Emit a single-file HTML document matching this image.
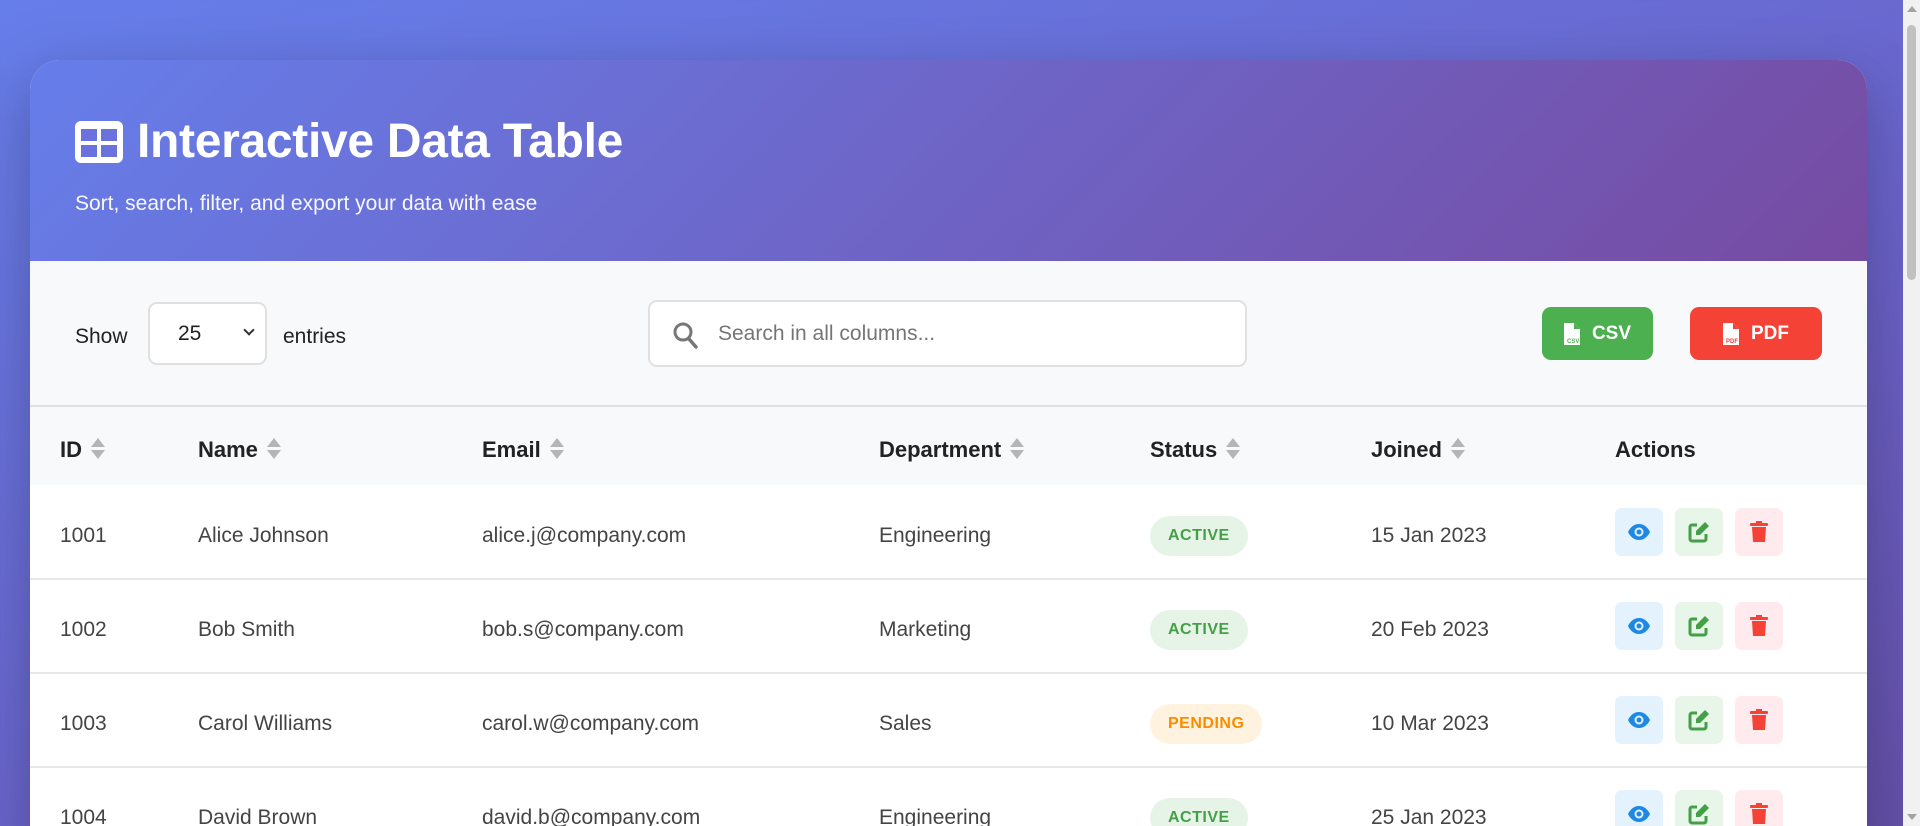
<!DOCTYPE html>
<html><head><meta charset="utf-8"><style>
*{box-sizing:border-box;margin:0;padding:0}
html,body{width:1920px;height:826px;overflow:hidden}
body{font-family:"Liberation Sans",sans-serif;background:linear-gradient(160deg,#667eea 0%,#6a62c8 60%,#6450a8 100%);position:relative}
.sb{position:absolute;right:0;top:0;width:17px;height:826px;background:#f1f1f1}
.sb .th{position:absolute;left:4px;top:25px;width:9px;height:255px;background:#c1c1c1;border-radius:5px}
.sb .up{position:absolute;left:4px;top:6px;border:5px solid transparent;border-bottom:6px solid #a3a3a3;border-top:0}
.sb .dn{position:absolute;left:4px;bottom:6px;border:5px solid transparent;border-top:6px solid #a3a3a3;border-bottom:0}
.card{position:absolute;left:30px;top:60px;width:1837px;height:800px;background:#fff;border-radius:30px 30px 0 0;overflow:hidden;box-shadow:0 20px 60px rgba(0,0,0,.25)}
.hd{height:201px;background:linear-gradient(135deg,#667eea 0%,#764ba2 100%);color:#fff;padding:0 45px;position:relative}
.hd h1{position:absolute;left:45px;top:54px;font-size:48px;font-weight:bold;display:flex;align-items:center;letter-spacing:-0.3px}
.hd h1 svg{margin-right:14px}
.hd p{position:absolute;left:45px;top:132px;font-size:21px;opacity:.95}
.ctl{height:146px;background:#f8f9fa;border-bottom:2px solid #e0e0e0;position:relative;font-size:21px;color:#222}
.ctl .show{position:absolute;left:45px;top:64px}
.sel{position:absolute;left:118px;top:41px;width:119px;height:63px;border:2px solid #e0e0e0;border-radius:9px;background:#fff;font-size:21px}
.sel span{position:absolute;left:28px;top:18px}
.sel i{position:absolute;right:12px;top:22px;width:8px;height:8px;border-right:2px solid #333;border-bottom:2px solid #333;transform:rotate(45deg)}
.ctl .ent{position:absolute;left:253px;top:64px}
.srch{position:absolute;left:618px;top:39px;width:599px;height:67px;border:2px solid #e0e0e0;border-radius:9px;background:#fff}
.srch span{position:absolute;left:68px;top:20px;color:#757575;font-size:21px}
.srch svg{position:absolute;left:22px;top:19px}
.btn{position:absolute;top:46px;height:53px;border-radius:9px;color:#fff;font-weight:bold;font-size:19px;display:flex;align-items:center;justify-content:center;gap:12px}
.csv{left:1512px;width:111px;background:#4caf50}
.pdf{left:1660px;width:132px;background:#f44336}
table{border-collapse:collapse;width:100%;font-size:21px;color:#444}
th{background:#f8f9fa;height:78px;text-align:left;font-weight:bold;color:#222;font-size:22px;padding-top:8px!important}
td{height:94px;border-bottom:2px solid #e8e8e8;padding-top:8px!important}
th,td{padding:0}
.c1{padding-left:30px!important;width:168px}.c2{width:284px}.c3{width:397px}.c4{width:271px}.c5{width:221px}.c6{width:244px}
.srt{display:inline-block;vertical-align:middle;margin-left:9px;width:14px;height:22px;position:relative;top:-2px}
.srt:before{content:"";position:absolute;left:0;top:0;border:7px solid transparent;border-bottom:9px solid #b5b5b5;border-top:0}
.srt:after{content:"";position:absolute;left:0;top:12px;border:7px solid transparent;border-top:9px solid #b5b5b5;border-bottom:0}
.bd{display:inline-block;height:40px;line-height:40px;padding:0 18px;border-radius:20px;font-size:16px;font-weight:bold;letter-spacing:.5px;position:relative;top:0}
.ac{background:#e6f4e7;color:#43a047}.pe{background:#fff3e0;color:#fb8c00}
.ab{display:inline-flex;width:48px;height:48px;border-radius:7px;align-items:center;justify-content:center;margin-right:12px;vertical-align:middle;position:relative;top:-4px}
.v{background:#e3f2fd}.e{background:#e8f5e9}.d{background:#ffebee}
</style></head><body>
<div class="card">
<div class="hd">
<h1><svg width="48" height="42" viewBox="0 0 48 42"><rect x="0" y="0" width="48" height="42" rx="6" fill="#fff"/><rect x="6" y="8" width="16" height="12" fill="#6b72de"/><rect x="26" y="8" width="16" height="12" fill="#6b72de"/><rect x="6" y="24" width="16" height="12" fill="#6b72de"/><rect x="26" y="24" width="16" height="12" fill="#6b72de"/></svg>Interactive Data Table</h1>
<p>Sort, search, filter, and export your data with ease</p>
</div>
<div class="ctl">
<span class="show">Show</span>
<div class="sel"><span>25</span><i></i></div>
<span class="ent">entries</span>
<div class="srch"><svg width="26" height="28" viewBox="0 0 26 28"><circle cx="11" cy="11" r="8" fill="none" stroke="#777" stroke-width="3"/><line x1="17" y1="18" x2="24" y2="26" stroke="#777" stroke-width="3.5" stroke-linecap="round"/></svg><span>Search in all columns...</span></div>
<div class="btn csv"><svg width="16" height="22" viewBox="0 0 16 22"><path d="M0 0h10l6 6v16H0z" fill="#fff"/><path d="M10 0v6h6" fill="#4caf50"/><text x="3" y="20" font-size="6" fill="#4caf50" font-family="Liberation Sans">CSV</text></svg>CSV</div>
<div class="btn pdf"><svg width="16" height="22" viewBox="0 0 16 22"><path d="M0 0h10l6 6v16H0z" fill="#fff"/><path d="M10 0v6h6" fill="#f44336"/><text x="3" y="20" font-size="6" fill="#f44336" font-family="Liberation Sans">PDF</text></svg>PDF</div>
</div>
<table>
<tr><th class="c1">ID<span class="srt"></span></th><th class="c2">Name<span class="srt"></span></th><th class="c3">Email<span class="srt"></span></th><th class="c4">Department<span class="srt"></span></th><th class="c5">Status<span class="srt"></span></th><th class="c6">Joined<span class="srt"></span></th><th>Actions</th></tr>
<tr><td class="c1">1001</td><td>Alice Johnson</td><td>alice.j@company.com</td><td>Engineering</td><td><span class="bd ac">ACTIVE</span></td><td>15 Jan 2023</td><td>AB</td></tr>
<tr><td class="c1">1002</td><td>Bob Smith</td><td>bob.s@company.com</td><td>Marketing</td><td><span class="bd ac">ACTIVE</span></td><td>20 Feb 2023</td><td>AB</td></tr>
<tr><td class="c1">1003</td><td>Carol Williams</td><td>carol.w@company.com</td><td>Sales</td><td><span class="bd pe">PENDING</span></td><td>10 Mar 2023</td><td>AB</td></tr>
<tr><td class="c1">1004</td><td>David Brown</td><td>david.b@company.com</td><td>Engineering</td><td><span class="bd ac">ACTIVE</span></td><td>25 Jan 2023</td><td>AB</td></tr>
</table>
</div>
<div class="sb"><div class="up"></div><div class="th"></div><div class="dn"></div></div>
<script>
var a='<span class="ab v"><svg width="24" height="18" viewBox="0 0 24 18"><path d="M1 9C4 3 8 1 12 1s8 2 11 8c-3 6-7 8-11 8S4 15 1 9z" fill="#1e88e5"/><circle cx="12" cy="9" r="4.5" fill="#e3f2fd"/><circle cx="12" cy="9" r="2.5" fill="#1e88e5"/></svg></span><span class="ab e"><svg width="22" height="22" viewBox="0 0 22 22"><path d="M9 4H4a2 2 0 0 0-2 2v12a2 2 0 0 0 2 2h12a2 2 0 0 0 2-2v-5" fill="none" stroke="#43a047" stroke-width="3"/><path d="M17 1l4 4-9 9H8v-4z" fill="#43a047"/></svg></span><span class="ab d"><svg width="18" height="22" viewBox="0 0 18 22"><rect x="0" y="2" width="18" height="3" rx="1" fill="#f44336"/><rect x="6" y="0" width="6" height="3" fill="#f44336"/><path d="M2 6h14l-1 15H3z" fill="#f44336"/></svg></span>';
document.querySelectorAll('td').forEach(function(t){if(t.textContent==='AB')t.innerHTML=a;});
</script>
</body></html>
